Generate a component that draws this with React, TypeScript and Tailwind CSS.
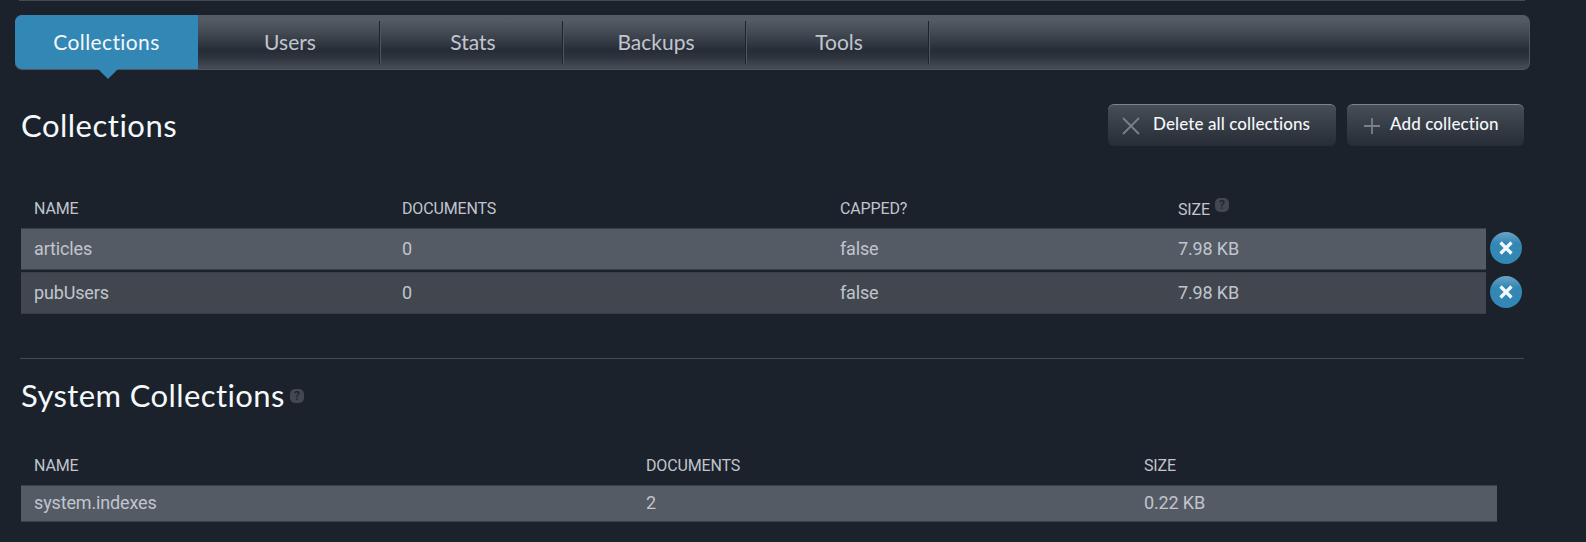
import type { ReactNode } from "react";

const tabs = ["Users", "Stats", "Backups", "Tools"];

const collections = [
  { name: "articles", documents: "0", capped: "false", size: "7.98 KB", tone: "bg-[#555b65]" },
  { name: "pubUsers", documents: "0", capped: "false", size: "7.98 KB", tone: "bg-[#42474f]" },
];

function Help({ className }: { className: string }) {
  return (
    <span
      className={`flex h-[14px] w-[14px] items-center justify-center rounded-[5px] bg-[#424750] font-['Roboto',sans-serif] text-[12px] leading-none font-medium tracking-normal text-[#20252e] ${className}`}
    >
      ?
    </span>
  );
}

function Button({ children, icon, className }: { children: ReactNode; icon: string; className: string }) {
  return (
    <button
      className={`flex h-[42px] items-center rounded-[6px] border-t border-[#7f858e] bg-linear-to-b from-[#484e57] via-[#373d46] to-[#262d36] pb-[3px] text-[17px] font-medium tracking-[0.1px] whitespace-nowrap text-[#f4f7fa] ${className}`}
    >
      <svg viewBox="0 0 18 18" className="mt-[4px] h-[18px] w-[18px] shrink-0" fill="none" stroke="#7a808a" strokeWidth="1.8">
        <path d={icon} />
      </svg>
      {children}
    </button>
  );
}

export default function App() {
  return (
    <div className="flex h-[542px] w-full flex-col overflow-hidden bg-[#1c222b] font-['Lato',sans-serif] text-[#c0c5ce] [font-variant-ligatures:none]">
      <div className="ml-[19px] h-px w-[1506px] shrink-0 bg-[#444a53]" />

      <nav className="mt-[14px] ml-[15px] flex h-[55px] w-[1515px] shrink-0 rounded-[7px] border-r border-b border-[#50565f] bg-[linear-gradient(to_bottom,#555b64_0%,#535962_12%,#444a53_32%,#30363f_55%,#262c35_66%,#30363f_80%,#444a53_96%)] text-[21px]">
        <div className="relative flex w-[183px] justify-center rounded-l-[7px] bg-[#3387b4] pt-[12px] leading-[30px] tracking-[0.4px] text-[#f4f7fa]">
          Collections
          <svg viewBox="0 0 20 10" className="absolute top-[54px] left-[83px] h-[10px] w-[20px]" fill="#3387b4">
            <path d="M0 0H20L10 10Z" />
          </svg>
        </div>
        {tabs.map((tab) => (
          <div key={tab} className="flex w-[183px] items-center">
            <span className="flex-1 pl-[3px] text-center leading-[30px]">{tab}</span>
            <span className="h-[43px] w-[2px] border-r border-[#50565f] bg-[#1e242d]" />
          </div>
        ))}
      </nav>

      <header className="mt-[34px] flex h-[42px] shrink-0 pl-[21px]">
        <h1 className="w-[1087px] text-[31px] leading-[42px] tracking-[0.5px] text-[#f4f9fc]">Collections</h1>
        <Button icon="M1 1L17 17M17 1L1 17" className="w-[228px] gap-[13px] pl-[14px]">
          Delete all collections
        </Button>
        <Button icon="M9 1V17M1 9H17" className="ml-[11px] w-[177px] gap-[9px] pl-[16px]">
          Add collection
        </Button>
      </header>

      <section className="mt-[48px] ml-[21px] shrink-0 font-['Roboto',sans-serif]">
        <div className="flex h-[34px] pl-[13px] text-[16px] leading-[29px] tracking-[-0.15px]">
          <span className="w-[368px]">NAME</span>
          <span className="w-[438px]">DOCUMENTS</span>
          <span className="w-[338px]">CAPPED?</span>
          <span className="flex pt-px">
            SIZE
            <Help className="mt-[3px] ml-[5px]" />
          </span>
        </div>
        <div className="flex flex-col gap-[2px]">
          {collections.map((row) => (
            <div key={row.name} className="flex h-[42px] items-center">
              <div
                className={`flex h-full w-[1465px] items-center border-y border-[#3a4049] pb-[2px] pl-[13px] text-[18px] tracking-[-0.15px] ${row.tone}`}
              >
                <span className="w-[368px]">{row.name}</span>
                <span className="w-[438px]">{row.documents}</span>
                <span className="w-[338px]">{row.capped}</span>
                <span>{row.size}</span>
              </div>
              <button
                aria-label="Delete"
                className="mt-[-2px] ml-[3.5px] flex h-[32px] w-[32px] items-center justify-center rounded-full bg-linear-to-b from-[#68a5c7] via-[#3387b4] via-35% to-[#3387b4]"
              >
                <svg viewBox="0 0 14 14" className="h-[14px] w-[14px]" fill="none" stroke="#f4f9fc" strokeWidth="3.2">
                  <path d="M1.5 1.5L12.5 12.5M12.5 1.5L1.5 12.5" />
                </svg>
              </button>
            </div>
          ))}
        </div>
      </section>

      <div className="mt-[44px] ml-[20px] h-px w-[1504px] shrink-0 bg-[#444a53]" />

      <div className="mt-[14px] flex h-[44px] shrink-0 items-center pl-[21px]">
        <h2 className="text-[31px] leading-[44px] tracking-[0.4px] text-[#f4f9fc]">System Collections</h2>
        <Help className="mt-[2px] ml-[5px]" />
      </div>

      <section className="mt-[34px] ml-[21px] shrink-0 font-['Roboto',sans-serif]">
        <div className="flex h-[34px] pl-[13px] text-[16px] leading-[29px] tracking-[-0.15px]">
          <span className="w-[612px]">NAME</span>
          <span className="w-[498px]">DOCUMENTS</span>
          <span>SIZE</span>
        </div>
        <div className="flex h-[37px] w-[1476px] items-center border-y border-[#3a4049] bg-[#555b65] pb-[2px] pl-[13px] text-[18px] tracking-[-0.15px]">
          <span className="w-[612px]">system.indexes</span>
          <span className="w-[498px]">2</span>
          <span>0.22 KB</span>
        </div>
      </section>
    </div>
  );
}
